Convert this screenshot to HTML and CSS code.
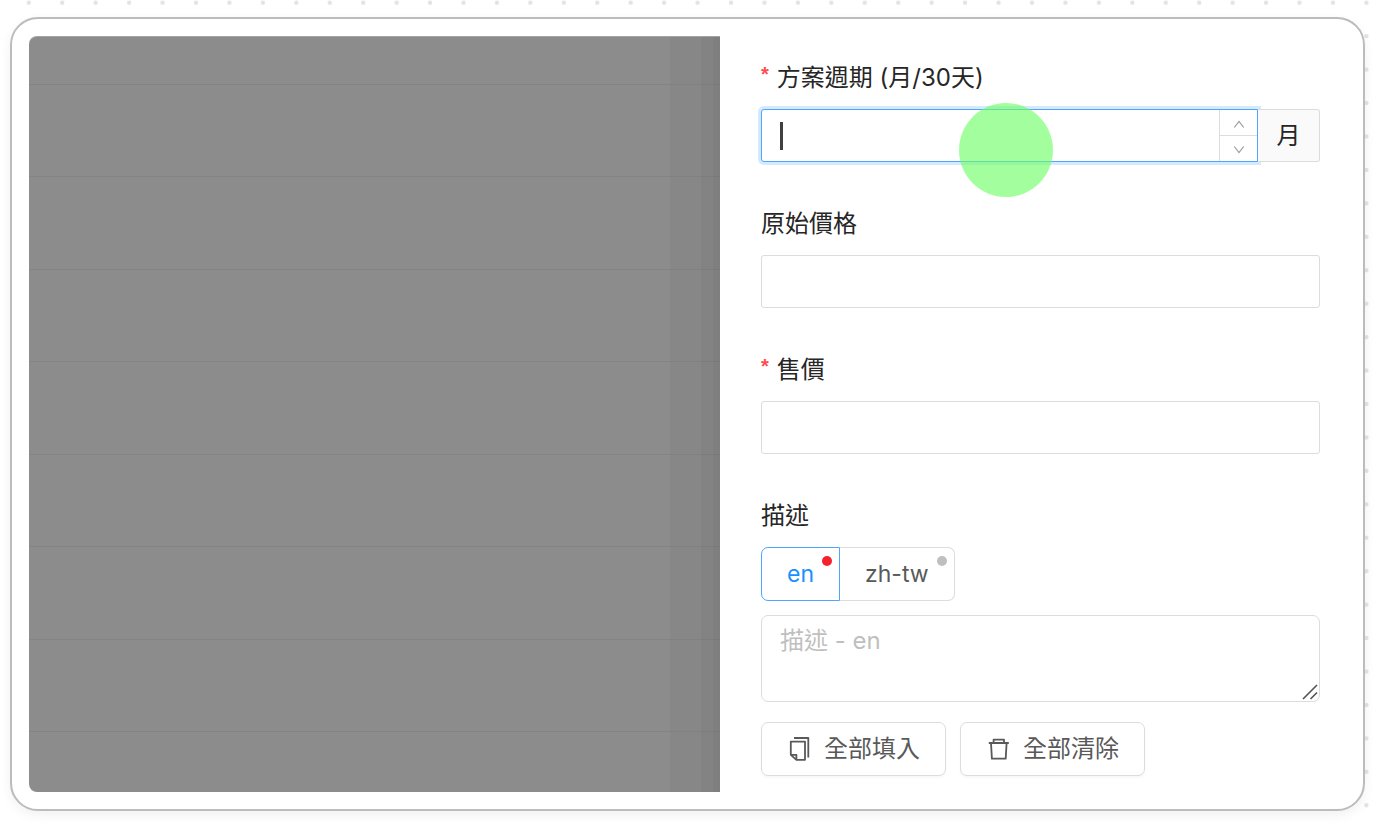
FILE: index.html
```html
<!DOCTYPE html>
<html lang="zh-TW">
<head>
<meta charset="utf-8">
<title>方案</title>
<link rel="stylesheet" href="styles.css">
</head>
<body>
<svg class="dots" aria-hidden="true">
  <defs>
    <pattern id="grid" x="12" y="-14" width="33.44" height="33.44" patternUnits="userSpaceOnUse">
      <circle cx="16.8" cy="16.8" r="2.2" fill="#e3e3e3"/>
    </pattern>
  </defs>
  <rect width="100%" height="100%" fill="url(#grid)"/>
</svg>
<main class="frame">
  <div class="backdrop">
    <div class="row row-head"></div>
    <div class="row"></div>
    <div class="row"></div>
    <div class="row"></div>
    <div class="row"></div>
    <div class="row"></div>
    <div class="row"></div>
    <div class="row"></div>
    <div class="row row-last"></div>
  </div>
  <form class="drawer">
    <div class="field">
      <label class="label required" for="period">方案週期 (月/30天)</label>
      <div class="group">
        <div class="number">
          <input class="number-input" id="period" type="text" inputmode="numeric">
          <span class="caret"></span>
          <div class="steps">
            <button class="step" type="button" aria-label="+"><svg width="12" height="10" viewBox="0 0 12 10"><path d="M1.300 9.500 6 3.500 10.700 9.500"/></svg></button>
            <button class="step" type="button" aria-label="-"><svg width="12" height="10" viewBox="0 0 12 10"><path d="M1.300 2.500 6 8.500 10.700 2.500"/></svg></button>
          </div>
          <span class="touch"></span>
        </div>
        <span class="addon">月</span>
      </div>
    </div>
    <div class="field">
      <label class="label" for="original">原始價格</label>
      <input class="input" id="original" type="text">
    </div>
    <div class="field">
      <label class="label required" for="price">售價</label>
      <input class="input" id="price" type="text">
    </div>
    <div class="field field-last">
      <label class="label" for="desc">描述</label>
      <div class="tabs">
        <button class="tab tab-active" type="button">en<span class="badge badge-red"></span></button>
        <button class="tab" type="button">zh-tw<span class="badge"></span></button>
      </div>
      <div class="area">
        <textarea class="textarea" id="desc" placeholder="描述 - en"></textarea>
        <svg class="grip" width="16" height="16" viewBox="0 0 16 16" aria-hidden="true"><path d="M1 15 15 1M8.500 15 15 8.500"/></svg>
      </div>
      <div class="actions">
        <button class="button" type="button">
          <svg class="icon" width="24" height="26" viewBox="0 0 24 26" aria-hidden="true"><path d="M2.800 5.600H17V23.800H8.400L2.800 18.800ZM2.800 18.800H8.400V23.800M6 2H20.300V21.500"/></svg>
          全部填入
        </button>
        <button class="button" type="button">
          <svg class="icon" width="24" height="26" viewBox="0 0 24 26" aria-hidden="true"><path d="M1.800 7H21.800M6.600 7V3.600H17V7M4 7 4.900 22.600H18.700L19.600 7"/></svg>
          全部清除
        </button>
      </div>
    </div>
  </form>
</main>
</body>
</html>
```
FILE: styles.css
```css
* { box-sizing: border-box; }

body {
  margin: 0;
  min-height: 100vh;
  padding: 17px 15px 13px 10px;
  display: flex;
  background: #fff;
  color: #262626;
  font: 24px/32px Inter, "Noto Sans CJK TC", sans-serif;
}

input, button, textarea { font: inherit; color: inherit; }

.dots {
  position: absolute;
  inset: 0;
  width: 100%;
  height: 100%;
  z-index: -1;
}

.frame {
  flex: 1;
  display: grid;
  grid-template-columns: 691fr 626fr;
  padding: 17px;
  border: 2px solid #bcbcbc;
  border-radius: 28px;
  background: #fff;
  box-shadow: 0 4px 12px rgba(0, 0, 0, .06);
}

.backdrop {
  display: flex;
  flex-direction: column;
  border-radius: 8px 0 0 8px;
  border-top: 1px solid #a3a3a3;
  overflow: hidden;
  background: linear-gradient(to left, #7f7f7f 7px, #838383 7px 19px, #878787 19px 50px, #8c8c8c 50px);
}

.row { flex: 92 0 0; border-bottom: 1px solid rgba(0, 0, 0, .05); }
.row-head { flex-grow: 47; }
.row-last { flex-grow: 60; border: 0; }

.drawer { padding: 26px 26px 16px 41px; }

.field { display: flex; flex-direction: column; margin-bottom: 46px; }
.field-last { margin-bottom: 0; }

.label { height: 32px; margin-bottom: 15px; }
.required::before {
  content: "*";
  margin-right: 8px;
  color: #ff4d4f;
  font: bold 20px/20px "Liberation Sans", sans-serif;
  vertical-align: 5px;
}

.input {
  height: 53px;
  padding: 0 18px;
  border: 1px solid #dcdcdc;
  border-radius: 3px;
  background: #fff;
}

.group { display: flex; height: 53px; }

.number {
  position: relative;
  flex: 1;
  display: flex;
  border: 1px solid #4da6ff;
  border-radius: 3px 0 0 3px;
  background: #fff;
  box-shadow: 0 0 0 3px #d5e9ff;
}

.number-input {
  flex: 1;
  min-width: 0;
  padding: 0 18px;
  border: 0;
  outline: 0;
  background: transparent;
}

.caret {
  position: absolute;
  left: 18px;
  top: 12px;
  width: 3px;
  height: 28px;
  background: #404040;
}

.steps {
  width: 38px;
  display: flex;
  flex-direction: column;
  border-left: 1px solid #dcdcdc;
}

.step {
  flex: 1;
  display: flex;
  align-items: center;
  justify-content: center;
  padding: 0;
  border: 0;
  background: transparent;
}
.step + .step { border-top: 1px solid #dcdcdc; }
.step path { fill: none; stroke: #999; stroke-width: 1.2; }

.touch {
  position: absolute;
  left: 197px;
  top: -7px;
  width: 94px;
  height: 94px;
  border-radius: 50%;
  background: rgba(110, 255, 100, .63);
  pointer-events: none;
}

.addon {
  position: relative;
  width: 62px;
  display: flex;
  align-items: center;
  justify-content: center;
  border: 1px solid #dcdcdc;
  border-left: 0;
  border-radius: 0 3px 3px 0;
  background: #fafafa;
}

.tabs { display: flex; margin-bottom: 14px; font-size: 23px; }

.tab {
  position: relative;
  height: 54px;
  padding: 0 25px;
  border: 1px solid #dcdcdc;
  border-left: 0;
  border-radius: 0 7px 7px 0;
  background: #fff;
  color: #595959;
}
.tab-active {
  border: 1px solid #4da6ff;
  border-radius: 7px 0 0 7px;
  color: #1890ff;
}

.badge {
  position: absolute;
  top: 8px;
  right: 7px;
  width: 10px;
  height: 10px;
  border-radius: 50%;
  background: #bfbfbf;
}
.badge-red { background: #f5222d; }

.area { position: relative; display: flex; margin-bottom: 20px; }

.textarea {
  flex: 1;
  height: 87px;
  padding: 9px 18px;
  border: 1px solid #dcdcdc;
  border-radius: 7px;
  background: #fff;
  resize: none;
}
.textarea::placeholder { color: #bfbfbf; opacity: 1; }

.grip { position: absolute; right: 2px; bottom: 2px; }
.grip path { fill: none; stroke: #555; stroke-width: 1.6; }

.actions { display: flex; gap: 14px; }

.button {
  height: 54px;
  display: flex;
  align-items: center;
  gap: 12px;
  padding: 0 25px 0 26px;
  border: 1px solid #dcdcdc;
  border-radius: 7px;
  background: #fff;
  box-shadow: 0 2px 2px rgba(0, 0, 0, .03);
  color: #595959;
  white-space: nowrap;
}
.icon path { fill: none; stroke: #595959; stroke-width: 1.8; stroke-linejoin: round; }
```
